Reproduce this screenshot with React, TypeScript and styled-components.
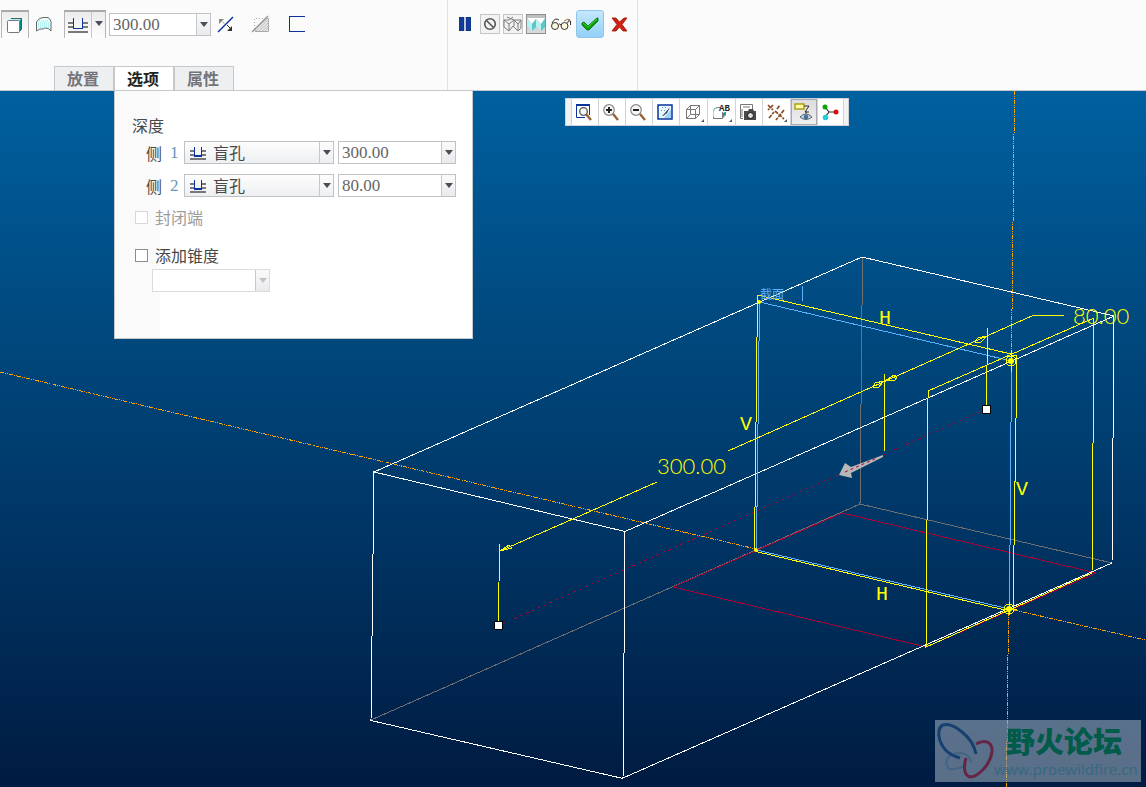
import React, { useState } from "react";
import styled, { createGlobalStyle, css } from "styled-components";

const cjk = `"Noto Sans CJK SC", sans-serif`;
const numeric = `"Liberation Serif", "Noto Sans CJK SC", serif`;

const GlobalStyle = createGlobalStyle`
  * { box-sizing: border-box; }
  body { margin: 0; font-family: ${cjk}; font-size: 16px; color: #484848; }
  button, input, select { font: inherit; color: inherit; margin: 0; }
  svg { display: block; flex: none; }
`;

const Page = styled.div`
  display: flex;
  flex-direction: column;
  min-height: 100vh;
`;

const Dashboard = styled.header`
  display: flex;
  height: 91px;
  background: #fbfbfb;
  border-bottom: 1px solid #c6c9cc;
`;

const FeatureSection = styled.section`
  display: flex;
  flex-direction: column;
  justify-content: space-between;
  flex: none;
  width: 448px;
  padding-top: 10px;
  border-right: 1px solid #e0e0e2;
`;

const ToolRow = styled.div`
  display: flex;
  align-items: center;
  height: 28px;
  padding-left: 1px;
`;

const MaterialGroup = styled.div`
  display: flex;
  gap: 8px;
  padding-left: 8px;
`;

const ConfirmSection = styled.section`
  display: flex;
  align-items: flex-start;
  flex: none;
  width: 190px;
  padding-top: 10px;
  border-right: 1px solid #e0e0e2;
`;

const ConfirmRow = styled(ToolRow)`
  gap: 3px;
  padding-left: 5px;
`;

const raised = css`
  border: 1px solid #b4b6ba;
  border-top: 2px solid #a8a8a8;
  border-bottom: 0;
  background: linear-gradient(#ececee, #fdfdfd);
`;

const ToolButton = styled.button<{ $pressed?: boolean }>`
  display: flex;
  align-items: center;
  justify-content: center;
  width: 28px;
  height: 28px;
  padding: 0;
  border: 0;
  background: none;
  ${(p) => p.$pressed && raised}
`;

const SplitButton = styled.div`
  display: flex;
  width: 42px;
  height: 28px;
  margin: 0 3px 0 7px;
  ${raised}
`;

const SplitPart = styled.button<{ $arrow?: boolean }>`
  display: flex;
  align-items: center;
  justify-content: center;
  flex: ${(p) => (p.$arrow ? "0 0 14px" : "1")};
  padding: 0 0 ${(p) => (p.$arrow ? 4 : 0)}px;
  border: 0;
  border-left: ${(p) => (p.$arrow ? "1px solid #c6c9cc" : "0")};
  background: none;
`;

const SquareButton = styled.button<{ $pressed?: boolean }>`
  display: flex;
  align-items: center;
  justify-content: center;
  width: 20px;
  height: 20px;
  padding: 0;
  border: 1px solid ${(p) => (p.$pressed ? "#8c8e92" : "#c6c6c8")};
  background: ${(p) => (p.$pressed ? "linear-gradient(#bdbdbf, #dcdcde)" : "#f2f2f3")};
`;

const PlainButton = styled(SquareButton)`
  width: 24px;
  border: 0;
  background: none;
`;

const AcceptButton = styled(ToolButton)`
  border: 1px solid #8fc6ea;
  border-radius: 3px;
  background: linear-gradient(#c4e7fd, #93d0f8);
`;

const TabList = styled.div`
  display: flex;
  padding-left: 54px;
  height: 24px;
`;

const Tab = styled.button<{ $active: boolean }>`
  width: 60px;
  height: 24px;
  padding: 0 2px 2px 0;
  font-size: 16px;
  font-weight: 700;
  line-height: 20px;
  color: ${(p) => (p.$active ? "#222" : "#74757b")};
  background: ${(p) => (p.$active ? "#fff" : "#eeeff1")};
  border: 1px solid #c6c9cc;
  border-bottom: 0;
`;

const Workspace = styled.main`
  position: relative;
  display: flex;
  flex: 1;
  min-height: 696px;
  background: linear-gradient(#00609f 0%, #004a80 32%, #003666 62%, #001b41 100%);
`;

const Scene = styled.svg`
  position: absolute;
  inset: 0;
  width: 100%;
  height: 100%;
`;

const DimensionText = styled.text`
  font-family: Lato, sans-serif;
  font-size: 22px;
  font-weight: 300;
  fill: #ffff00;
`;

const ConstraintText = styled.text`
  font-family: "Liberation Mono", monospace;
  font-size: 20px;
  fill: #ffff00;
`;

const SectionLabel = styled.text`
  font-family: ${cjk};
  font-size: 12px;
  fill: #5cb2ff;
`;

const OptionsPanel = styled.section`
  position: absolute;
  top: 0;
  left: 114px;
  width: 359px;
  height: 248px;
  padding: 22px 16px 0 17px;
  border: 1px solid #c6c9cc;
  border-top: 0;
  background: linear-gradient(90deg, #fafafa 45px, #fff 45px);
  font-size: 16px;
  line-height: 24px;
`;

const GroupTitle = styled.h2`
  margin: 0;
  font-size: 16px;
  font-weight: 400;
  line-height: 24px;
`;

const SideRow = styled.div`
  display: flex;
  align-items: center;
  gap: 4px;
  height: 33px;
  padding: 0 0 2px 14px;
`;

const SideLabel = styled.label`
  display: flex;
  gap: 8px;
  width: 34px;
`;

const SideNumber = styled.span`
  font-family: ${numeric};
  font-size: 17px;
  color: #6796b5;
`;

const Field = styled.div<{ $width: number; $disabled?: boolean }>`
  display: flex;
  width: ${(p) => p.$width}px;
  height: 23px;
  border: 1px solid ${(p) => (p.$disabled ? "#dcdcde" : "#bfc2c6")};
  background: #fff;
`;

const FieldInput = styled.input`
  flex: 1;
  min-width: 0;
  padding: 0 3px;
  border: 0;
  outline: 0;
  background: none;
  font-family: ${numeric};
  font-size: 17px;
  line-height: 21px;
  color: #666;
`;

const FieldArrow = styled.button`
  display: flex;
  align-items: center;
  justify-content: center;
  width: 14px;
  padding: 0;
  border: 0;
  border-left: 1px solid #c6c9cc;
  background: linear-gradient(#fafafa, #e9eaec);
`;

const SelectBox = styled.div`
  display: grid;
  grid-template-columns: 28px 1fr 14px;
  align-items: center;
  width: 150px;
  height: 23px;
  border: 1px solid #bfc2c6;
  background: linear-gradient(#fdfdfd, #eeeff1);
`;

const SelectIcon = styled.span`
  grid-area: 1 / 1;
  padding-left: 5px;
  pointer-events: none;
`;

const SelectArrow = styled.span`
  grid-area: 1 / 3;
  display: flex;
  align-items: center;
  justify-content: center;
  height: 21px;
  border-left: 1px solid #c6c9cc;
  pointer-events: none;
`;

const Select = styled.select`
  grid-area: 1 / 1 / 2 / 4;
  height: 21px;
  padding: 0 16px 0 28px;
  appearance: none;
  border: 0;
  outline: 0;
  background: none;
  line-height: 21px;
`;

const CheckRow = styled.label<{ $disabled?: boolean }>`
  display: flex;
  align-items: center;
  gap: 7px;
  height: 24px;
  padding-left: 3px;
  color: ${(p) => (p.$disabled ? "#9b9b9b" : "#484848")};
`;

const Checks = styled.div`
  display: flex;
  flex-direction: column;
  gap: 14px;
  margin-top: 2px;
`;

const Checkbox = styled.input`
  width: 13px;
  height: 13px;
  margin: 0;
  appearance: none;
  border: 1px solid #8e8e90;
  background: #fff;
  &:disabled { border-color: #d8d8da; }
  &:checked { background: #4b5563; }
`;

const TaperRow = styled.div`
  padding: 2px 0 0 20px;
`;

const ViewToolbar = styled.div`
  position: absolute;
  top: 7px;
  left: 565px;
  display: flex;
  height: 28px;
  padding: 0 4px 0 5px;
  border: 1px solid #cfd2da;
  background: #f1f2f4;
`;

const ViewButton = styled.button<{ $pressed?: boolean; $menu?: boolean }>`
  position: relative;
  display: flex;
  align-items: center;
  justify-content: center;
  width: ${(p) => (p.$menu ? 28 : 27)}px;
  height: 26px;
  padding: 0 2px 0 0;
  border: 0;
  border-left: 1px solid #cfd2da;
  background: ${(p) => (p.$pressed ? "linear-gradient(#dcdcde, #efeff1)" : "#fff")};
  box-shadow: ${(p) => (p.$pressed ? "inset 0 0 0 1px #a6a8ac" : "none")};
  &:last-child { border-right: 1px solid #cfd2da; }
`;

const CornerMark = styled.span`
  position: absolute;
  right: 3px;
  bottom: 3px;
  border-left: 3px solid transparent;
  border-bottom: 3px solid #555;
`;

const Watermark = styled.aside`
  position: absolute;
  right: 5px;
  bottom: 5px;
  display: flex;
  width: 206px;
  height: 62px;
  background: rgba(150, 167, 184, 0.6);
`;

const WatermarkText = styled.div`
  display: flex;
  flex-direction: column;
  padding-top: 2px;
  margin-left: -3px;
  white-space: nowrap;
`;

const WatermarkTitle = styled.strong`
  padding-left: 12px;
  font-size: 29px;
  line-height: 36px;
  font-weight: 900;
  color: #005b4a;
`;

const WatermarkUrl = styled.a`
  font-family: "Noto Sans", sans-serif;
  font-size: 15px;
  line-height: 22px;
  color: #38697f;
  text-decoration: none;
`;

const Down = ({ color = "#4b4d58" }: { color?: string }) => (
  <svg width="8" height="5" viewBox="0 0 8 5"><path d="M0 0h8L4 5z" fill={color} /></svg>
);

const SolidIcon = () => (
  <svg width="16" height="16" viewBox="0 0 16 16">
    <path d="M1 4 4 1h11l-3 3z" fill="#9ff" /><path d="m12 4 3-3v11l-3 3z" fill="#008b8b" />
    <path d="M4 1.500h10.500V12M12.500 14.500l2-2" fill="none" stroke="#555" />
    <rect x="0.500" y="3.500" width="12" height="12" rx="1" fill="#fff" stroke="#777" />
  </svg>
);

const SurfaceIcon = () => (
  <svg width="17" height="17" viewBox="0 0 17 17">
    <path d="M1.500 6Q4 1.500 8 1.500h5q2 1 3 4V15q-2-3-5-3-2 0-3 1-3-1-6.500 2z" fill="#e8ffff" stroke="#666" />
    <path d="M4 5h10M3 7h12M3 9h12M3 11h11" stroke="#7fe6e6" strokeDasharray="1 1" />
  </svg>
);

const BlindIcon = ({ size }: { size: number }) => (
  <svg width={size} height={size === 16 ? 14 : 16} viewBox="0 0 20 16" preserveAspectRatio="none" shapeRendering="crispEdges">
    <path d="M0 6h5M15 6h5M0 10h5M15 10h5M0 14.500h20" stroke="#77797c" strokeWidth="2" fill="none" />
    <path d="M5.500 1v10.500h9V1" fill="none" stroke="#0a349d" strokeWidth="1.600" />
  </svg>
);

const FlipIcon = () => (
  <svg width="17" height="17" viewBox="0 0 17 17">
    <path d="m1 16 15-15" stroke="#0a349d" strokeWidth="1.500" />
    <path d="m3 4 5 4" stroke="#888" strokeDasharray="1 1" /><path d="M2 3h5L2 8z" fill="#88887c" />
    <path d="m10 9 5 5" stroke="#333" /><path d="M15 10v5h-5z" fill="#333" />
  </svg>
);

const RemoveIcon = () => (
  <svg width="20" height="20" viewBox="0 0 20 20">
    <path d="M4 15 16 4.500h1.500v13H4z" fill="#ececec" stroke="#aaa" />
    <path d="m5 17 12-11M8 17l9-8M11 17l6-5M14 17l3-3" stroke="#bbb" />
    <path d="M3.500 15V4.500h11" fill="none" stroke="#aaa" strokeDasharray="1 2" />
    <path d="M1 18 17 2" stroke="#999" strokeWidth="1.500" />
  </svg>
);

const ThickenIcon = () => (
  <svg width="16" height="16" viewBox="0 0 16 16" shapeRendering="crispEdges">
    <path d="M16 0.500H0.500v15H16" fill="none" stroke="#0a349d" />
  </svg>
);

const PauseIcon = () => (
  <svg width="12" height="14" viewBox="0 0 12 14"><path d="M0 0h5v14H0zM7 0h5v14H7z" fill="#123d9b" stroke="#0b2a70" strokeWidth="0.500" /></svg>
);

const NoneIcon = () => (
  <svg width="14" height="14" viewBox="0 0 14 14"><g fill="none" stroke="#555" strokeWidth="1.600"><circle cx="7" cy="7" r="5.300" /><path d="m3.500 3.500 7 7" /></g></svg>
);

const PreviewWireIcon = () => (
  <svg width="20" height="18" viewBox="0 0 20 18"><path d="M1 5v7l5 4 4-5 5 5 3-3V5M1 5l5 4v7M1 5h5l4-3M6 9l5-4v6M11 5l4 4v7M15 9l3-4M4 2l7 3h7" fill="none" stroke="#7c7c7c" /></svg>
);

const PreviewSolidIcon = () => (
  <svg width="18" height="16" viewBox="0 0 18 16">
    <path d="M0 2h18l-4 6-5-5-4 5z" fill="#fff" /><path d="M0 3l5 5v7l-5-5zM9 3l5 5v7l-5-5z" fill="#b5f2f2" />
    <path d="m5 8 4-5v8l-4 4zM14 8l4-5v8l-4 4z" fill="#5cc6c8" />
  </svg>
);

const GlassesIcon = () => (
  <svg width="22" height="14" viewBox="0 0 22 14">
    <g fill="#fff9dc" stroke="#333"><circle cx="5" cy="9" r="3.500" /><circle cx="14.500" cy="9" r="3.500" /></g>
    <path d="M2 6q3-6 7-3M8.500 8q1-2 2.500 0M17.500 6q1-4 3-2v4" fill="none" stroke="#333" /><path d="M14 4q4-3 6-1" fill="none" stroke="#a66a33" />
  </svg>
);

const AcceptIcon = () => (
  <svg width="18" height="14" viewBox="0 0 18 14"><path d="m1 6 2-1 4 4 9-8h1v3l-9 9H6L1 8z" fill="#08a008" stroke="#056b05" strokeWidth="0.800" /><path d="m2 6 5 4 9-8" fill="none" stroke="#38d52c" /></svg>
);

const CancelIcon = () => (
  <svg width="17" height="15" viewBox="0 0 17 15"><path d="M1 1h4l3.500 4L13 1h3l-5 6.500 5 6.500h-4l-3.500-4L5 14H1l5-6.500z" fill="#d32113" stroke="#931208" strokeWidth="0.800" /></svg>
);

const Handle = () => <path d="m11 11 5 6" stroke="#96603c" strokeWidth="2.400" />;

const RefitIcon = () => (
  <svg width="18" height="18" viewBox="0 0 18 18"><path d="M14.500 12V1.500H1.500v13H10" fill="#fff" stroke="#0a349d" /><path d="M1 2h14" stroke="#0a349d" strokeWidth="2" /><circle cx="8.500" cy="8.500" r="3.800" fill="#f4faff" stroke="#555" strokeWidth="1.300" /><Handle /></svg>
);

const ZoomIcon = ({ plus }: { plus?: boolean }) => (
  <svg width="18" height="18" viewBox="0 0 18 18"><circle cx="7" cy="7" r="5.300" fill="#f7f7f7" stroke="#888" strokeWidth="1.200" /><path d={plus ? "M4 7h6M7 4v6" : "M4 7h6"} stroke="#222" strokeWidth="2" /><Handle /></svg>
);

const RepaintIcon = () => (
  <svg width="16" height="16" viewBox="0 0 16 16">
    <rect x="1" y="1" width="14" height="14" fill="#e6f6ff" stroke="#0a349d" strokeWidth="1.500" />
    <path d="M2 2h4L2 7z" fill="#fff" /><path d="M14 5v9H7z" fill="#9fd2f7" />
    <path d="m5 3 1 1M8 3l1 1M4 6l1 1M7 6l1 1" stroke="#5f93c8" />
    <path d="m5 12 3-3 5-6-3 6-4 3z" fill="#26364d" />
  </svg>
);

const BoxIcon = () => (
  <svg width="16" height="16" viewBox="0 0 16 16"><path d="M1.500 5.500h9v9h-9zM5.500 1.500h9v9h-9zM1.500 5.500l4-4M10.500 5.500l4-4M10.500 14.500l4-4M1.500 14.500l4-4" fill="none" stroke="#777" /></svg>
);

const SavedViewIcon = () => (
  <svg width="18" height="18" viewBox="0 0 18 18"><path d="M1.500 8.500q0-4 4-4H8M1.500 8v7.500h9V9M13.500 9v3l-3 3" fill="none" stroke="#777" /><path d="M1.500 14V8q1-3 4-3" fill="none" stroke="#7fe6e6" /><path d="m11 10 2-1v3l-2 2z" fill="#159a9c" /><text x="7" y="8" fontFamily="Liberation Mono" fontSize="9" fontWeight="700" fill="#222">AB</text></svg>
);

const CameraIcon = () => (
  <svg width="18" height="18" viewBox="0 0 18 18"><path d="M4 15.500H1.500v-14h12V6M4 4h7M3 6v8" fill="none" stroke="#777" /><path d="M5 8h4l1-2h4l1 2h2v9H5z" fill="#4a4a4a" /><circle cx="11.500" cy="12.500" r="3" fill="#ddd" stroke="#111" /></svg>
);

const DatumIcon = () => (
  <svg width="18" height="18" viewBox="0 0 18 18"><path d="m1 2 5 5M6 2 1 7M10 6l3-4M2 15l5-6M8 8l9 8M17 7l-8 10" stroke="#8a4c22" strokeWidth="1.700" strokeDasharray="4 1" /></svg>
);

const AnnotationIcon = () => (
  <svg width="18" height="20" viewBox="0 0 18 20"><rect x="1" y="2" width="9" height="5" fill="#ffffa8" stroke="#a89a00" strokeWidth="1.400" /><path d="M10 4h5l-4 6h4M12 9v3" stroke="#333" fill="none" /><path d="M6 15q6-6 12 0-6 5-12 0" fill="#cdd7e0" stroke="#5a6670" /><circle cx="12" cy="15" r="2.300" fill="#456f9e" /></svg>
);

const SpinIcon = () => (
  <svg width="18" height="18" viewBox="0 0 18 18"><path d="m4 4 4 5-4 5M8 9h7" stroke="#333" fill="none" strokeWidth="1.200" /><circle cx="4" cy="4" r="2.500" fill="#06a60b" /><circle cx="4.500" cy="14.500" r="2.800" fill="#20ccd5" /><circle cx="15" cy="9" r="2.500" fill="#d61313" /></svg>
);

const viewTools = [
  { name: "重新调整", icon: <RefitIcon /> },
  { name: "放大", icon: <ZoomIcon plus /> },
  { name: "缩小", icon: <ZoomIcon /> },
  { name: "重画", icon: <RepaintIcon /> },
  { name: "显示样式", icon: <BoxIcon />, menu: true },
  { name: "已保存方向", icon: <SavedViewIcon />, menu: true },
  { name: "视图管理器", icon: <CameraIcon /> },
  { name: "基准显示", icon: <DatumIcon />, menu: true },
  { name: "注释显示", icon: <AnnotationIcon />, pressed: true },
  { name: "旋转中心", icon: <SpinIcon /> },
];

function DepthField({ label, value, width }: { label: string; value: string; width: number }) {
  const [depth, setDepth] = useState(value);
  return (
    <Field $width={width}>
      <FieldInput aria-label={label} value={depth} onChange={(e) => setDepth(e.target.value)} />
      <FieldArrow aria-label={`${label}列表`}><Down /></FieldArrow>
    </Field>
  );
}

function SideDepth({ side, value }: { side: number; value: string }) {
  return (
    <SideRow>
      <SideLabel htmlFor={`side-${side}`}>侧<SideNumber>{side}</SideNumber></SideLabel>
      <SelectBox>
        <Select id={`side-${side}`} defaultValue="blind"><option value="blind">盲孔</option></Select>
        <SelectIcon><BlindIcon size={16} /></SelectIcon>
        <SelectArrow><Down /></SelectArrow>
      </SelectBox>
      <DepthField label={`侧 ${side} 深度`} value={value} width={118} />
    </SideRow>
  );
}

function Model() {
  return (
    <Scene viewBox="0 91 1146 696" preserveAspectRatio="xMidYMid slice" role="img" aria-label="拉伸预览">
      <g fill="none" shapeRendering="crispEdges" strokeWidth="1">
        <path stroke="#707070" d="M862.500 257 860 504l252 59M860 504 371 720" />
        <path stroke="#a80034" d="m842 513 254 60-170 74-253-60z" />
        <path stroke="#a80034" strokeDasharray="3 4 2 4" d="m502 624 482-214" />
        <path stroke="#ffa500" strokeDasharray="4 1 1 1 1 1" d="m0 372 756 177M1014 610l132 30M1014.500 91l-3 263M1008.500 612l-2 175" />
        <path stroke="#fff" d="m374 472 251 59.500-2 247-252-58zL862 257l252 59-489 215.500M1114 316l-2 247-489 215" />
        <path stroke="#5cb2ff" d="m759.500 302 252 59-2 248-253-59z" />
        <g stroke="#ffff00">
          <path d="M762 295.500h-4.500l-3 255M762 296l249 58M1011 355.500h6l-4 254M756 551.500l247 58" />
          <path d="M928 398v-7l166-73-2 255-166 74 2-249" />
          <path d="m500 551 157-69M728 451l305-135.500h31M499.500 544l-1 78M884.500 374v77M987.500 328l-1 77" />
          <path d="m500 551 9-6 3 3zM884 381l-9 2-2 4 5 1zM885 381l9-6 3 2-2 3zM987 336l-9 2-3 4 5 1z" />
          <circle cx="1011" cy="361" r="5" /><circle cx="1009" cy="609" r="5" />
          <path d="M1011 350v22M1002 609h15M1009 602v13" />
        </g>
      </g>
      <g fill="#ffff00"><circle cx="759" cy="302" r="2" /><circle cx="756" cy="550" r="2" /><circle cx="1011" cy="361" r="3" /><circle cx="1009" cy="609" r="3" /></g>
      <path d="m883 455-32 12-6-4-6 12 13 3-1-5 32-16z" fill="#b7b7b7" />
      <path d="m845 472 32-14" stroke="#a80034" strokeDasharray="3 3" />
      <g fill="#fff" stroke="#000" shapeRendering="crispEdges"><rect x="982.500" y="405.500" width="8" height="8" /><rect x="494.500" y="621.500" width="8" height="8" /></g>
      <DimensionText x="657" y="474">300.00</DimensionText>
      <DimensionText x="1073" y="324">80.00</DimensionText>
      <ConstraintText x="879" y="324">H</ConstraintText>
      <ConstraintText x="876" y="600">H</ConstraintText>
      <ConstraintText x="740" y="430">V</ConstraintText>
      <ConstraintText x="1016" y="495">V</ConstraintText>
      <SectionLabel x="760" y="299">截面</SectionLabel>
      <path d="M802.500 286v15" stroke="#5cb2ff" shapeRendering="crispEdges" />
    </Scene>
  );
}

export default function App() {
  const [tab, setTab] = useState("选项");
  return (
    <Page>
      <GlobalStyle />
      <Dashboard>
        <FeatureSection>
          <ToolRow>
            <ToolButton $pressed aria-label="实体"><SolidIcon /></ToolButton>
            <ToolButton aria-label="曲面"><SurfaceIcon /></ToolButton>
            <SplitButton>
              <SplitPart aria-label="深度类型"><BlindIcon size={20} /></SplitPart>
              <SplitPart $arrow aria-label="深度选项"><Down /></SplitPart>
            </SplitButton>
            <DepthField label="深度值" value="300.00" width={102} />
            <ToolButton aria-label="反向"><FlipIcon /></ToolButton>
            <MaterialGroup>
              <ToolButton aria-label="移除材料" disabled><RemoveIcon /></ToolButton>
              <ToolButton aria-label="加厚草绘"><ThickenIcon /></ToolButton>
            </MaterialGroup>
          </ToolRow>
          <TabList role="tablist">
            {["放置", "选项", "属性"].map((name) => (
              <Tab key={name} role="tab" aria-selected={tab === name} $active={tab === name} onClick={() => setTab(name)}>{name}</Tab>
            ))}
          </TabList>
        </FeatureSection>
        <ConfirmSection>
          <ConfirmRow>
            <PlainButton aria-label="暂停"><PauseIcon /></PlainButton>
            <SquareButton aria-label="无预览"><NoneIcon /></SquareButton>
            <SquareButton aria-label="分离预览"><PreviewWireIcon /></SquareButton>
            <SquareButton $pressed aria-label="连接预览"><PreviewSolidIcon /></SquareButton>
            <PlainButton aria-label="校验"><GlassesIcon /></PlainButton>
            <AcceptButton aria-label="确定"><AcceptIcon /></AcceptButton>
            <PlainButton aria-label="取消"><CancelIcon /></PlainButton>
          </ConfirmRow>
        </ConfirmSection>
      </Dashboard>
      <Workspace>
        <Model />
        <OptionsPanel role="tabpanel" aria-label={tab}>
          <GroupTitle>深度</GroupTitle>
          <SideDepth side={1} value="300.00" />
          <SideDepth side={2} value="80.00" />
          <Checks>
            <CheckRow $disabled><Checkbox type="checkbox" disabled />封闭端</CheckRow>
            <CheckRow><Checkbox type="checkbox" />添加锥度</CheckRow>
          </Checks>
          <TaperRow>
            <Field $width={118} $disabled>
              <FieldInput aria-label="锥度" disabled />
              <FieldArrow aria-label="锥度列表" disabled><Down color="#c2c3c7" /></FieldArrow>
            </Field>
          </TaperRow>
        </OptionsPanel>
        <ViewToolbar role="toolbar" aria-label="视图">
          {viewTools.map((t) => (
            <ViewButton key={t.name} aria-label={t.name} $pressed={t.pressed} $menu={t.menu}>{t.icon}{t.menu && <CornerMark />}</ViewButton>
          ))}
        </ViewToolbar>
        <Watermark>
          <svg width="62" height="62" viewBox="0 0 62 62" fill="none">
            <path d="M14 49C8 42 12 33 26 33q8 1 10 9M14 49q9 1 16-4" stroke="#416485" strokeWidth="2" />
            <path d="M41 34C38 17 18 2 8 5 0 8 2 32 25 38" stroke="#173f70" strokeWidth="3" />
            <path d="M41 24C50 19 58 22 57 32 55 46 42 57 35 57 28 55 29 45 31 38" stroke="#662446" strokeWidth="3" />
          </svg>
          <WatermarkText><WatermarkTitle>野火论坛</WatermarkTitle><WatermarkUrl href="#forum">www.proewildfire.cn</WatermarkUrl></WatermarkText>
        </Watermark>
      </Workspace>
    </Page>
  );
}
